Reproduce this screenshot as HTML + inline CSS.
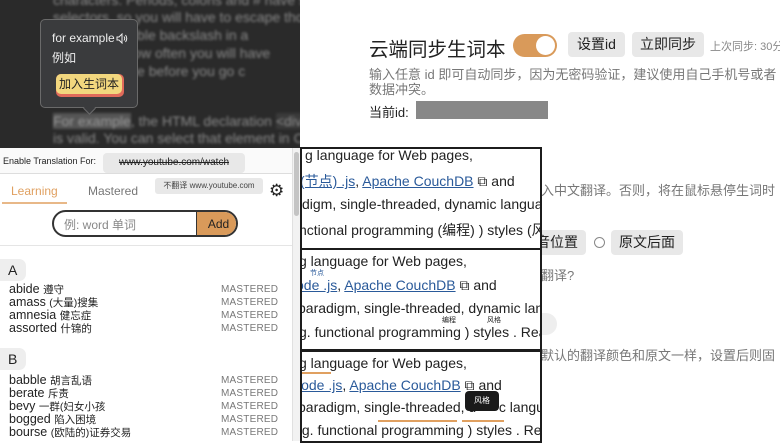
<!DOCTYPE html>
<html><head><meta charset="utf-8"><style>
*{margin:0;padding:0;box-sizing:border-box}
body{width:780px;height:441px;overflow:hidden;background:#fff;position:relative;font-family:"Liberation Sans","Noto Sans CJK SC",sans-serif}
.a{position:absolute;white-space:nowrap}
#dark{position:absolute;left:0;top:0;width:300px;height:148px;background:#2a2a2a;overflow:hidden}
.bl{position:absolute;left:53px;color:#8a8a8a;font-size:14px;filter:blur(1.3px);white-space:nowrap}
.pan{position:absolute;left:0;top:148px;width:300px;height:293px;background:#fff;overflow:hidden;font-size:11px;color:#222}
.row{position:absolute;left:9px;font-size:12.5px;color:#222}
.row small{font-size:10.5px}
.ms{position:absolute;left:221px;font-size:10px;color:#777;letter-spacing:.2px}
.box{position:absolute;left:300px;width:242px;border:2px solid #1c1c1c;background:#fff;overflow:hidden;font-size:14px;color:#222}
.box .l{position:absolute;white-space:nowrap}
.lk{color:#2a5a9a;text-decoration:underline}
.btn{position:absolute;background:#e8e8e8;border-radius:4px;font-size:14px;color:#222;text-align:center}
.g{color:#777;font-size:13px}
</style></head><body>
<div id="dark">
<div class="bl" style="top:-8px">characters. Periods, colons and # have special</div>
<div class="bl" style="top:9px">selectors, so you will have to escape those</div>
<div class="bl" style="top:27px"><span style="color:#4a6a9a">CSS</span> or a double backslash in a</div>
<div class="bl" style="top:45px">think about how often you will have</div>
<div class="bl" style="top:63px">sheets or code before you go c</div>
<div class="bl" style="top:113px"><span style="background:#555;color:#999">For example</span>, the HTML declaration <span style="background:#3a3a3a">&lt;div i</span></div>
<div class="bl" style="top:130px">is valid. You can select that element in CSS</div>
<div class="a" style="left:40px;top:19px;width:98px;height:89px;background:#3a3b3d;border:1px solid #6a6a6a;border-radius:5px"></div>
<div class="a" style="left:85px;top:104px;width:9px;height:9px;background:#3a3b3d;border-right:1px solid #6a6a6a;border-bottom:1px solid #6a6a6a;transform:rotate(45deg)"></div>
<div class="a" style="left:52px;top:31px;color:#eee;font-size:12px">for example</div>
<svg class="a" style="left:116px;top:33px" width="12" height="11" viewBox="0 0 12 11"><path d="M1 4h2l3-3v9L3 7H1z" fill="none" stroke="#eee" stroke-width="1"/><path d="M8 3.5q1.5 2 0 4M9.5 2q2.5 3.5 0 7" fill="none" stroke="#eee" stroke-width="1"/></svg>
<div class="a" style="left:52px;top:49px;color:#eee;font-size:12px">例如</div>
<div class="a" style="left:56px;top:74px;width:68px;height:23px;background:#e06a5a;border-radius:5px"></div>
<div class="a" style="left:56px;top:74px;width:66px;height:20px;background:#f2d77e;border-radius:5px;color:#222;font-size:12px;line-height:20px;text-align:center">加入生词本</div>
</div>
<div class="pan">
<div class="a" style="left:0;top:0;width:300px;height:26px;border-bottom:1px solid #ddd;background:#fafafa"></div>
<div class="a" style="left:3px;top:8px;font-size:9px">Enable Translation For:</div>
<div class="a" style="left:103px;top:5px;width:142px;height:20px;background:#e8e8e8;border-radius:4px;font-size:10px;line-height:20px;text-align:center;text-decoration:line-through">www.youtube.com/watch</div>
<div class="a" style="left:11px;top:36px;font-size:12px;color:#e0a060">Learning</div>
<div class="a" style="left:2px;top:54px;width:65px;height:2px;background:#e8b888"></div>
<div class="a" style="left:88px;top:36px;font-size:12px;color:#777">Mastered</div>
<div class="a" style="left:155px;top:30px;width:108px;height:16px;background:#e8e8e8;border-radius:3px;font-size:8px;line-height:16px;text-align:center;color:#444">不翻译 www.youtube.com</div>
<div class="a" style="left:269px;top:33px;font-size:17px;color:#222">⚙</div>
<div class="a" style="left:52px;top:62px;width:186px;height:27px;border:2px solid #333;border-radius:14px;overflow:hidden;background:#fff">
<div class="a" style="left:10px;top:4px;font-size:12px;color:#888">例: word 单词</div>
<div class="a" style="left:142px;top:0;width:44px;height:25px;background:#d99a5a;border-left:1px solid #333;font-size:12px;line-height:24px;text-align:center;color:#222">Add</div>
</div>
<div class="a" style="left:0;top:97px;width:292px;height:1px;background:#e5e5e5"></div>
<div class="a" style="left:0;top:111px;width:26px;height:22px;background:#eee;border-radius:0 7px 7px 0;font-size:14px;line-height:22px;padding-left:8px">A</div>
<div class="row" style="top:134px">abide <small>遵守</small></div><div class="ms" style="top:136px">MASTERED</div>
<div class="row" style="top:147px">amass <small>(大量)搜集</small></div><div class="ms" style="top:149px">MASTERED</div>
<div class="row" style="top:160px">amnesia <small>健忘症</small></div><div class="ms" style="top:162px">MASTERED</div>
<div class="row" style="top:173px">assorted <small>什锦的</small></div><div class="ms" style="top:175px">MASTERED</div>
<div class="a" style="left:0;top:200px;width:26px;height:22px;background:#eee;border-radius:0 7px 7px 0;font-size:14px;line-height:22px;padding-left:8px">B</div>
<div class="row" style="top:225px">babble <small>胡言乱语</small></div><div class="ms" style="top:227px">MASTERED</div>
<div class="row" style="top:238px">berate <small>斥责</small></div><div class="ms" style="top:240px">MASTERED</div>
<div class="row" style="top:251px">bevy <small>一群(妇女小孩</small></div><div class="ms" style="top:253px">MASTERED</div>
<div class="row" style="top:264px">bogged <small>陷入困境</small></div><div class="ms" style="top:266px">MASTERED</div>
<div class="row" style="top:277px">bourse <small>(欧陆的)证券交易</small></div><div class="ms" style="top:279px">MASTERED</div>
<div class="a" style="left:292px;top:0;width:8px;height:293px;background:#f2f2f2;border-left:1px solid #e0e0e0"></div>
<div class="a" style="left:294px;top:4px;width:5px;height:64px;background:#c4c4c4;border-radius:3px"></div>
</div>

<div class="a" style="left:369px;top:33px;font-size:19.5px;color:#222">云端同步生词本</div>
<div class="a" style="left:513px;top:34px;width:44px;height:23px;background:#d99a5a;border-radius:12px"><div class="a" style="left:23px;top:2px;width:19px;height:19px;background:#fff;border-radius:50%"></div></div>
<div class="btn" style="left:568px;top:32px;width:57px;height:25px;line-height:25px">设置id</div>
<div class="btn" style="left:632px;top:32px;width:72px;height:25px;line-height:25px">立即同步</div>
<div class="a" style="left:710px;top:38px;font-size:11px;color:#888">上次同步: 30分钟前</div>
<div class="a g" style="left:369px;top:67px;line-height:15px">输入任意 id 即可自动同步，因为无密码验证，建议使用自己手机号或者<br>数据冲突。</div>
<div class="a" style="left:369px;top:102px;font-size:13px;color:#222">当前id:</div>
<div class="a" style="left:416px;top:101px;width:132px;height:18px;background:#888"></div>
<div class="a g" style="left:541px;top:180px">入中文翻译。否则，将在鼠标悬停生词时</div>
<div class="btn" style="left:530px;top:230px;width:56px;height:25px;line-height:25px;text-align:right;padding-right:8px">音位置</div>
<div class="a" style="left:594px;top:237px;width:11px;height:11px;border:1px solid #888;border-radius:50%"></div>
<div class="btn" style="left:611px;top:230px;width:72px;height:25px;line-height:25px">原文后面</div>
<div class="a g" style="left:541px;top:265px">翻译?</div>
<div class="a" style="left:530px;top:313px;width:27px;height:22px;background:#eee;border-radius:11px"></div>
<div class="a g" style="left:541px;top:345px">默认的翻译颜色和原文一样，设置后则固</div>

<div class="box" style="top:147px;height:103px">
<div class="l" style="left:3px;top:-2px">g language for Web pages,</div>
<div class="l" style="left:-2px;top:22px"><span class="lk">(节点) .js</span>, <span class="lk">Apache CouchDB</span> ⧉ and</div>
<div class="l" style="left:0px;top:47px">digm, single-threaded, dynamic langua</div>
<div class="l" style="left:-3px;top:71px">nctional programming (编程) ) styles (风</div>
</div>
<div class="box" style="top:248px;height:103px">
<div class="l" style="left:-3px;top:3px">g language for Web pages,</div>
<div class="l" style="left:8px;top:18px;font-size:7px;color:#2a5a9a">节点</div>
<div class="l" style="left:-6px;top:27px"><span class="lk">ode .js</span>, <span class="lk">Apache CouchDB</span> ⧉ and</div>
<div class="l" style="left:-4px;top:50px">paradigm, single-threaded, dynamic langu</div>
<div class="l" style="left:140px;top:65px;font-size:7px">编程</div>
<div class="l" style="left:185px;top:65px;font-size:7px">风格</div>
<div class="l" style="left:-3px;top:74px">g. functional programming ) styles . Read</div>
</div>
<div class="box" style="top:350px;height:93px">
<div class="l" style="left:-3px;top:3px">g language for Web pages,</div>
<div class="l" style="left:-3px;top:20px;width:32px;height:2px;background:#e0a060"></div>
<div class="l" style="left:-4px;top:25px"><span class="lk">lode .js</span>, <span class="lk">Apache CouchDB</span> ⧉ and</div>
<div class="l" style="left:-4px;top:47px">paradigm, single-threaded, d<span style="visibility:hidden">yna</span>c langua</div>
<div class="l" style="left:163px;top:39px;width:34px;height:20px;background:#1a1a1a;border-radius:4px;color:#fff;font-size:8px;line-height:20px;text-align:center">风格</div>
<div class="l" style="left:76px;top:68px;width:79px;height:2px;background:#e0a060"></div>
<div class="l" style="left:160px;top:68px;width:42px;height:2px;background:#e0a060"></div>
<div class="l" style="left:-4px;top:70px">.g. functional programming ) styles . Read r</div>
</div>
</body></html>
